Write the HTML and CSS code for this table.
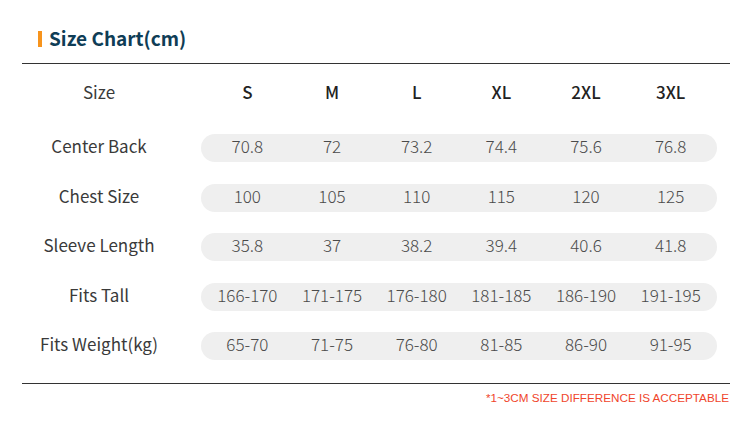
FILE: index.html
```html
<!DOCTYPE html>
<html>
<head>
<meta charset="utf-8">
<link rel="stylesheet" href="styles.css">
</head>
<body>
<div class="page">
  <div class="title-row">
    <span class="title-bar"></span>
    <h1 class="title">Size Chart(cm)</h1>
  </div>
  <div class="rule"></div>
  <div class="table">
    <div class="row head">
      <div class="label">Size</div>
      <div class="cells">
        <span>S</span><span>M</span><span>L</span><span>XL</span><span>2XL</span><span>3XL</span>
      </div>
    </div>
    <div class="row">
      <div class="label">Center Back</div>
      <div class="cells pill">
        <span>70.8</span><span>72</span><span>73.2</span><span>74.4</span><span>75.6</span><span>76.8</span>
      </div>
    </div>
    <div class="row">
      <div class="label">Chest Size</div>
      <div class="cells pill">
        <span>100</span><span>105</span><span>110</span><span>115</span><span>120</span><span>125</span>
      </div>
    </div>
    <div class="row">
      <div class="label">Sleeve Length</div>
      <div class="cells pill">
        <span>35.8</span><span>37</span><span>38.2</span><span>39.4</span><span>40.6</span><span>41.8</span>
      </div>
    </div>
    <div class="row">
      <div class="label">Fits Tall</div>
      <div class="cells pill">
        <span>166-170</span><span>171-175</span><span>176-180</span><span>181-185</span><span>186-190</span><span>191-195</span>
      </div>
    </div>
    <div class="row">
      <div class="label">Fits Weight(kg)</div>
      <div class="cells pill">
        <span>65-70</span><span>71-75</span><span>76-80</span><span>81-85</span><span>86-90</span><span>91-95</span>
      </div>
    </div>
  </div>
  <div class="rule bottom"></div>
  <p class="note">*1~3CM SIZE DIFFERENCE IS ACCEPTABLE</p>
</div>
</body>
</html>
```
FILE: styles.css
```css
html, body {
  margin: 0;
  padding: 0;
  background: #ffffff;
}
body {
  font-family: "Noto Sans CJK SC", "Noto Sans", sans-serif;
  width: 750px;
  height: 438px;
  overflow: hidden;
}
.page {
  padding: 26px 20px 0 22px;
}
.title-row {
  display: flex;
  align-items: center;
  padding-left: 16px;
  height: 26px;
}
.title-bar {
  width: 4px;
  height: 16px;
  background: #f7941d;
  margin-right: 7px;
}
.title {
  margin: 0 0 3px 0;
  font-size: 19px;
  font-weight: 700;
  color: #0f3d56;
  line-height: 23px;
}
.rule {
  height: 1px;
  background: #333333;
  margin-top: 11px;
}
.table {
  display: flex;
  flex-direction: column;
  gap: 21.5px;
  padding-top: 16px;
}
.row {
  display: flex;
  align-items: center;
  height: 28px;
}
.row.head {
  margin-bottom: 4.5px;
}
.label {
  width: 154px;
  height: 28px;
  box-sizing: border-box;
  padding-bottom: 4px;
  line-height: 24px;
  text-align: center;
  font-size: 17px;
  color: #3a3a3a;
}
.cells {
  margin-left: 25px;
  width: 516px;
  height: 28px;
  box-sizing: border-box;
  padding: 0 4px 4px 4px;
  display: grid;
  grid-template-columns: repeat(6, 1fr);
  align-items: center;
}
.cells span {
  text-align: center;
  font-size: 17px;
  line-height: 24px;
}
.head .cells span {
  font-weight: 500;
  color: #222222;
}
.pill {
  background: #efefef;
  border-radius: 14px;
}
.pill span {
  font-weight: 300;
  color: #4a4a4a;
}
.rule.bottom {
  margin-top: 23px;
}
.note {
  margin: 7px 0 0 0;
  text-align: right;
  font-family: "Liberation Sans", Arial, sans-serif;
  font-size: 11.7px;
  color: #f0452b;
  padding-right: 1px;
}
```
